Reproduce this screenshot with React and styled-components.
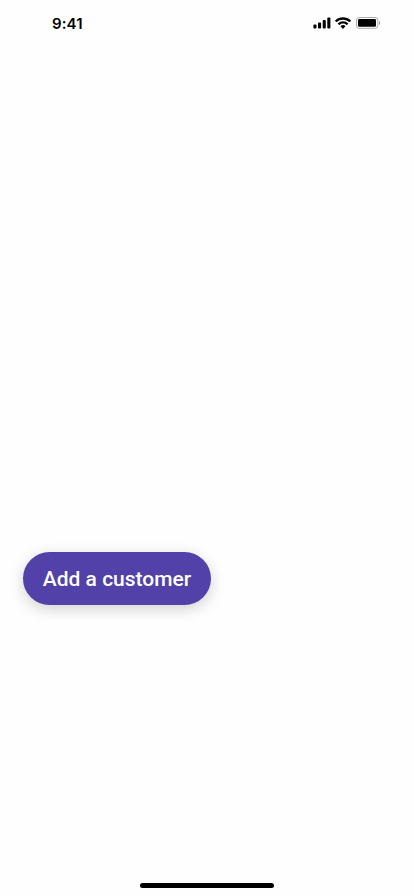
import React from 'react';
import styled, { createGlobalStyle } from 'styled-components';

const GlobalStyle = createGlobalStyle`
  * { box-sizing: border-box; }
  body { margin: 0; background: #fefefe; }
`;

const Screen = styled.div`
  display: flex;
  flex-direction: column;
  width: 100%;
  height: 896px;
  background: #fefefe;
`;

const StatusBar = styled.header`
  display: flex;
  align-items: center;
  justify-content: space-between;
  height: 46px;
  padding: 0 34px 0 52px;
`;

const Time = styled.span`
  font: 600 15px/20px Inter, sans-serif;
  letter-spacing: 0.1px;
  color: #000;
  padding-top: 1px;
`;

const StatusIcons = styled.div`
  display: flex;
  align-items: center;
  gap: 4px;
  padding-bottom: 1px;
  svg { display: block; }
  svg:last-child { margin-left: 1px; }
`;

const Content = styled.main`
  flex: 1;
  display: flex;
  align-items: flex-start;
  padding: 506px 23px 0;
`;

const PillButton = styled.button`
  width: 188px;
  height: 53px;
  padding: 2px 0 0;
  border: 0;
  border-radius: 27px;
  background: #5241a9;
  color: #fff;
  font: 500 21px/51px Roboto, sans-serif;
  white-space: nowrap;
  -webkit-font-smoothing: antialiased;
  box-shadow: 0 4px 15px rgba(0, 0, 0, 0.18);
`;

const HomeArea = styled.footer`
  display: flex;
  justify-content: center;
  align-items: flex-end;
  padding-bottom: 8px;
`;

const HomeIndicator = styled.div`
  width: 134px;
  height: 5px;
  border-radius: 3px;
  background: #000;
`;

const Signal = () => (
  <svg width="18" height="12" viewBox="0 0 18 12">
    <rect x=".4" y="7.4" width="3.1" height="4" rx="1" />
    <rect x="5" y="5.4" width="3.1" height="6" rx="1" />
    <rect x="9.7" y="3" width="3.1" height="8.4" rx="1" />
    <rect x="14.3" y=".5" width="3.1" height="10.9" rx="1" />
  </svg>
);

const Wifi = () => (
  <svg width="16" height="12" viewBox="0 0 15.3 11">
    <path d="M7.67 2.28c2.22 0 4.36.85 5.97 2.38.12.12.32.12.44 0l1.16-1.17a.33.33 0 0 0 0-.47 11 11 0 0 0-15.14 0 .33.33 0 0 0 0 .47l1.16 1.17c.12.12.31.12.43 0A8.66 8.66 0 0 1 7.67 2.28Zm0 3.8c1.22 0 2.4.45 3.3 1.27.12.12.32.12.44 0l1.16-1.18a.33.33 0 0 0 0-.47 7.12 7.12 0 0 0-9.8 0 .33.33 0 0 0 0 .47l1.16 1.18c.12.12.32.12.44 0a4.9 4.9 0 0 1 3.3-1.27Zm2.23 2.57a.33.33 0 0 1-.1.24L7.9 10.9a.33.33 0 0 1-.46 0L5.43 8.89a.33.33 0 0 1 .02-.48 3.4 3.4 0 0 1 4.43 0c.07.06.1.15.1.24Z" />
  </svg>
);

const Battery = () => (
  <svg width="24" height="12" viewBox="0 0 24 12">
    <rect x=".5" y=".5" width="21.3" height="10.8" rx="2.6" fill="none" stroke="#000" opacity=".32" />
    <path d="M23 4v4c.7-.35 1.1-1.1 1.1-2S23.7 4.35 23 4" opacity=".4" />
    <rect x="2" y="2.1" width="18" height="7.6" rx="1.3" />
  </svg>
);

export default function App() {
  return (
    <Screen>
      <GlobalStyle />
      <StatusBar>
        <Time>9:41</Time>
        <StatusIcons><Signal /><Wifi /><Battery /></StatusIcons>
      </StatusBar>
      <Content><PillButton type="button">Add a customer</PillButton></Content>
      <HomeArea><HomeIndicator /></HomeArea>
    </Screen>
  );
}
